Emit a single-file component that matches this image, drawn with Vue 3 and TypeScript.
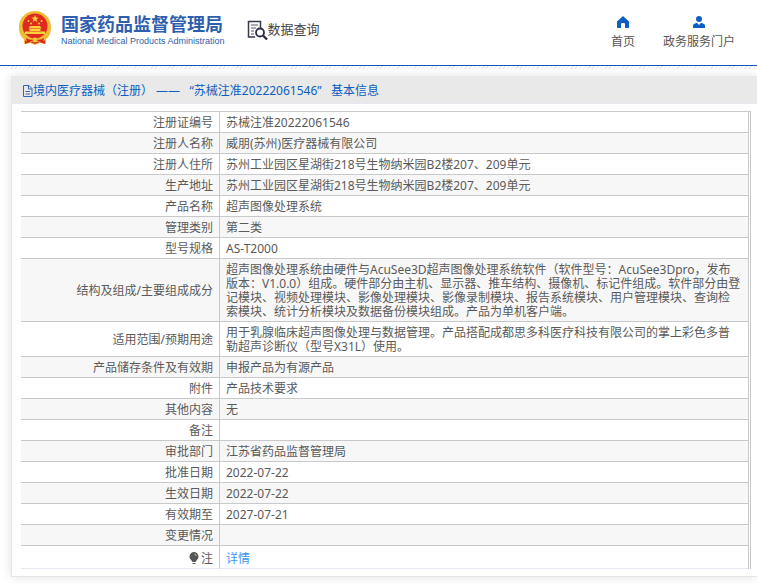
<script setup lang="ts">
interface Row {
  label: string
  value: string
}

const licence = '苏械注准20222061546'

const rows: Row[] = [
  { label: '注册证编号', value: licence },
  { label: '注册人名称', value: '威朋(苏州)医疗器械有限公司' },
  { label: '注册人住所', value: '苏州工业园区星湖街218号生物纳米园B2楼207、209单元' },
  { label: '生产地址', value: '苏州工业园区星湖街218号生物纳米园B2楼207、209单元' },
  { label: '产品名称', value: '超声图像处理系统' },
  { label: '管理类别', value: '第二类' },
  { label: '型号规格', value: 'AS-T2000' },
  {
    label: '结构及组成/主要组成成分',
    value:
      '超声图像处理系统由硬件与AcuSee3D超声图像处理系统软件（软件型号：AcuSee3Dpro，发布版本：V1.0.0）组成。硬件部分由主机、显示器、推车结构、摄像机、标记件组成。软件部分由登记模块、视频处理模块、影像处理模块、影像录制模块、报告系统模块、用户管理模块、查询检索模块、统计分析模块及数据备份模块组成。产品为单机客户端。',
  },
  {
    label: '适用范围/预期用途',
    value:
      '用于乳腺临床超声图像处理与数据管理。产品搭配成都思多科医疗科技有限公司的掌上彩色多普勒超声诊断仪（型号X31L）使用。',
  },
  { label: '产品储存条件及有效期', value: '申报产品为有源产品' },
  { label: '附件', value: '产品技术要求' },
  { label: '其他内容', value: '无' },
  { label: '备注', value: '' },
  { label: '审批部门', value: '江苏省药品监督管理局' },
  { label: '批准日期', value: '2022-07-22' },
  { label: '生效日期', value: '2022-07-22' },
  { label: '有效期至', value: '2027-07-21' },
  { label: '变更情况', value: '' },
]
</script>

<template>
  <div class="page">
    <header class="top">
      <a class="brand" href="#">
        <svg class="emblem" viewBox="0 0 34 36" aria-hidden="true">
          <path d="M17 1C8 1 1 8 1 17c0 6 2 10 5 12v5l6-1 5 2 5-2 6 1v-5c3-2 5-6 5-12C33 8 26 1 17 1z" fill="#eebb35" />
          <path d="M7 28l5 2 5-1 5 1 5-2v6l-5-2-5 2-5-2-5 2z" fill="#d92a20" />
          <circle cx="17" cy="16" r="12.500" fill="#e12a1f" />
          <path d="M17 5l1 2.600h2.800l-2.200 1.700.8 2.700-2.400-1.600-2.400 1.600.8-2.700-2.200-1.700H16z" fill="#fbd23c" />
          <g fill="#fbd23c">
            <circle cx="10.500" cy="11" r="1" />
            <circle cx="23.500" cy="11" r="1" />
            <circle cx="13" cy="13.500" r="1" />
            <circle cx="21" cy="13.500" r="1" />
            <path d="M12 16h10l1.500 2.500h-13zM11.500 19h11v2h-11zM7 21.500h20V24H7z" />
          </g>
          <path d="M3 22c3 6 8 8 14 8s11-2 14-8c-1 6-4 9-7 10H10c-3-1-6-4-7-10z" fill="#f0bd38" />
          <path d="M8 28c3 2 6 2 9 2s6 0 9-2l-1 5-5-2-3 2-3-2-5 2z" fill="#d9251d" />
          <circle cx="17" cy="30" r="2.500" fill="#f3c43c" />
        </svg>
        <span class="names">
          <span class="zh">国家药品监督管理局</span>
          <span class="en">National Medical Products Administration</span>
        </span>
      </a>
      <a class="query" href="#">
        <svg class="query-icon" viewBox="0 0 21 21" fill="none" aria-hidden="true">
          <path d="M8 17H1.500V1.500h12V8" stroke="#39394b" stroke-width="1.500" />
          <path d="M4 5h7M4 8h5M4 11h3M4 14h3" stroke="#55555f" stroke-width="1.200" />
          <circle cx="13" cy="12.500" r="4" stroke="#2c2c40" stroke-width="1.800" />
          <path d="M16 15.500l4 4" stroke="#2c2c40" stroke-width="2.400" />
        </svg>
        <span>数据查询</span>
      </a>
      <nav class="nav">
        <a href="#">
          <svg viewBox="0 0 12 12" aria-hidden="true">
            <path d="M6 0L0 5.500V11q0 1 1 1h3V8q0-1 1-1h2q1 0 1 1v4h3q1 0 1-1V5.500z" fill="#0c5fc4" />
          </svg>
          <span>首页</span>
        </a>
        <a href="#">
          <svg viewBox="0 0 12 12" aria-hidden="true">
            <circle cx="6" cy="3" r="3" fill="#0c5fc4" />
            <path d="M0 12v-2.500Q0 8 2 7.500l2-.8 2 2.300 2-2.300 2 .8q2 .5 2 2V12z" fill="#0c5fc4" />
          </svg>
          <span>政务服务门户</span>
        </a>
      </nav>
    </header>
    <div class="hatch"></div>

    <main class="card">
      <h1 class="title">
        <svg viewBox="0 0 11 12" fill="none" stroke="#2a68c0" aria-hidden="true">
          <path d="M1.500.5H7l3 3v8H1.500zM6.500.5V4H10M3.500 6.500H8M3.500 9H8" />
        </svg>
        <span>境内医疗器械（注册） ——&nbsp;&nbsp; “{{ licence }}”&nbsp;&nbsp; 基本信息</span>
      </h1>
      <div class="frame">
        <table>
          <colgroup>
            <col class="label-col" />
            <col />
          </colgroup>
          <tbody>
            <tr v-for="row in rows" :key="row.label">
              <th scope="row">{{ row.label }}</th>
              <td>{{ row.value }}</td>
            </tr>
            <tr class="note">
              <th scope="row">
                <svg viewBox="0 0 10 12" aria-hidden="true">
                  <path d="M5 0a4.500 4.500 0 0 0-3 7.800L3.500 10h3L8 7.800A4.500 4.500 0 0 0 5 0z" fill="#555" />
                  <path d="M3.500 11.500h3" stroke="#555" />
                  <path d="M5.500 2q1.500.3 1.800 2" stroke="#ddd" stroke-width=".8" fill="none" />
                </svg>注
              </th>
              <td><a href="#">详情</a></td>
            </tr>
          </tbody>
        </table>
      </div>
    </main>
  </div>
</template>

<style>
body {
  background: #fff;
}
</style>

<style scoped>
.page {
  font: 12px/14px "Noto Sans", "Noto Sans CJK SC", sans-serif;
  text-spacing-trim: space-all;
  color: #5a5a5a;
  overflow: hidden;
  padding-bottom: 9px;
}
a {
  color: inherit;
  text-decoration: none;
}
.top {
  display: flex;
  align-items: flex-start;
  height: 65px;
  padding: 0 22px 0 18px;
  border-bottom: 1px solid #0a5cba;
}
.brand {
  display: flex;
  gap: 9px;
  padding-top: 10px;
}
.emblem {
  width: 34px;
  height: 36px;
}
.names {
  display: flex;
  flex-direction: column;
  color: #2e5fae;
  white-space: nowrap;
  padding-top: 3px;
}
.zh {
  font-size: 18px;
  line-height: 22px;
  font-weight: 700;
}
.en {
  font: 9px/12px "Liberation Sans", sans-serif;
}
.query {
  display: flex;
  align-items: flex-start;
  padding-top: 20px;
  margin-left: 22px;
  font-size: 13px;
  line-height: 18px;
  color: #444;
  white-space: nowrap;
}
.query-icon {
  width: 21px;
  height: 21px;
}
.nav {
  display: flex;
  gap: 28px;
  margin-left: auto;
  padding-top: 16px;
}
.nav a {
  display: flex;
  flex-direction: column;
  align-items: center;
  gap: 7px;
  color: #555;
  white-space: nowrap;
}
.nav svg {
  width: 12px;
  height: 12px;
}
.hatch {
  height: 3px;
  background: repeating-linear-gradient(135deg, #eeeaec 0 1px, #fff 1px 3px);
}
.card {
  margin: 7px 0 0 11px;
  padding-bottom: 7px;
  border-left: 1px solid #e6e6ea;
  border-bottom: 1px solid #e6e6e6;
  box-shadow: 0 0 10px rgba(0, 0, 0, 0.12);
}
.title {
  display: flex;
  align-items: center;
  box-sizing: border-box;
  height: 28px;
  margin: 0 0 0 -1px;
  padding: 2px 11px 0;
  background: #e9e9e9;
  border-bottom: 1px solid #e8e8f0;
  color: #0c5fc0;
  font-size: 12px;
  font-weight: 400;
  white-space: nowrap;
}
.title svg {
  width: 11px;
  height: 12px;
}
.frame {
  margin: 7px 6px 0 9px;
  padding-right: 1px;
  border-top: 1px solid #c8c9cb;
  border-right: 1px solid #c8c9cb;
}
table {
  width: 100%;
  table-layout: fixed;
  border-collapse: separate;
  border-spacing: 0;
  border-right: 1px solid #c8c9cb;
}
.label-col {
  width: 198px;
}
th,
td {
  padding: 4px 7px 2px 6px;
  border-bottom: 1px solid #c8c9cb;
  font-weight: 400;
  vertical-align: middle;
}
th {
  text-align: right;
  padding-right: 6px;
}
td {
  text-align: left;
  border-left: 1px solid #c8c9cb;
}
tr:nth-child(even) {
  background: #f7f7f7;
}
.note th,
.note td {
  padding-top: 6px;
  padding-bottom: 2px;
  border-bottom-color: #e8e8f2;
}
.note th svg {
  width: 10px;
  height: 12px;
  margin-right: 2px;
  vertical-align: -1px;
}
.note a {
  color: #3a96f5;
}
</style>
